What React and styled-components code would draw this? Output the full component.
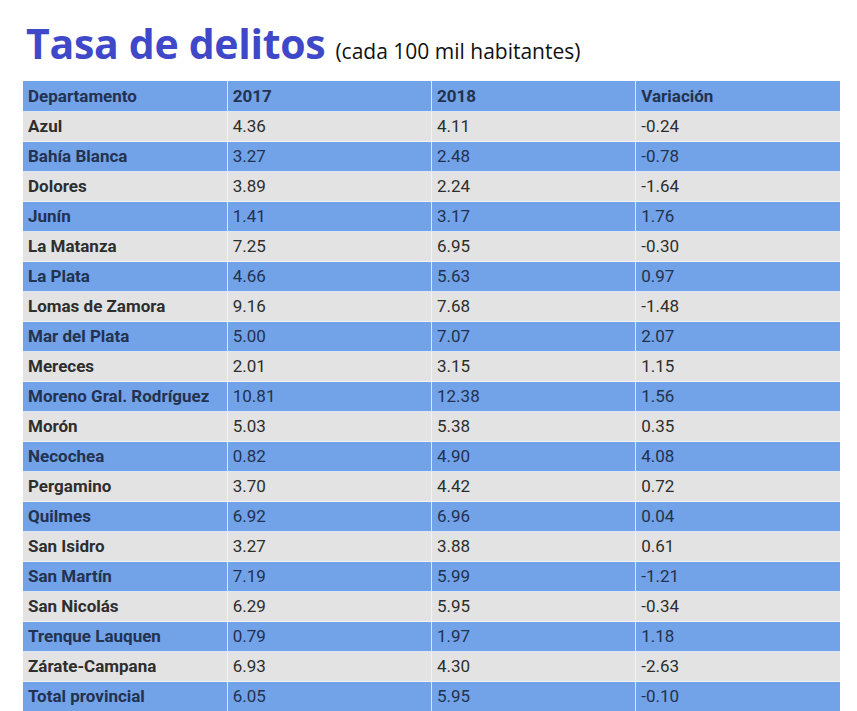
import React from 'react';
import styled, { createGlobalStyle } from 'styled-components';

const GlobalStyle = createGlobalStyle`
  html, body {
    margin: 0;
    padding: 0;
    background: #fff;
  }
`;

const Page = styled.main`
  width: 857px;
  height: 711px;
  overflow: hidden;
  padding: 16px 0 0 23px;
  box-sizing: border-box;
`;

const Heading = styled.h1`
  margin: 0 0 10px 3px;
  display: flex;
  align-items: baseline;
  gap: 10px;
  font-family: "Open Sans", sans-serif;
  line-height: 55px;
  height: 55px;

  .main {
    font-size: 41px;
    font-weight: 700;
    color: #3f48c8;
    letter-spacing: -0.3px;
  }
  .note {
    font-size: 21px;
    font-weight: 400;
    color: #111;
  }
`;

const Table = styled.table`
  width: 817px;
  table-layout: fixed;
  border-collapse: collapse;
  font-family: Roboto, "Liberation Sans", sans-serif;
  font-size: 17px;
`;

const Row = styled.tr`
  height: 30px;
  background: ${p => (p.$blue ? '#72a2e8' : '#e3e3e3')};
  color: ${p => (p.$blue ? '#23324f' : '#2e2e2e')};
`;

const Cell = styled.td`
  padding: 0 0 0 5px;
  border: 1px solid ${p => (p.$blue ? '#dbe6f6' : '#f1f3f6')};
  border-top: none;
  border-left: none;
  font-weight: ${p => (p.$bold ? 700 : 400)};
  text-align: left;
  white-space: nowrap;
  overflow: hidden;

  &:last-child {
    border-right: none;
  }
`;

const rows = [
  ['Azul', '4.36', '4.11', '-0.24'],
  ['Bahía Blanca', '3.27', '2.48', '-0.78'],
  ['Dolores', '3.89', '2.24', '-1.64'],
  ['Junín', '1.41', '3.17', '1.76'],
  ['La Matanza', '7.25', '6.95', '-0.30'],
  ['La Plata', '4.66', '5.63', '0.97'],
  ['Lomas de Zamora', '9.16', '7.68', '-1.48'],
  ['Mar del Plata', '5.00', '7.07', '2.07'],
  ['Mereces', '2.01', '3.15', '1.15'],
  ['Moreno Gral. Rodríguez', '10.81', '12.38', '1.56'],
  ['Morón', '5.03', '5.38', '0.35'],
  ['Necochea', '0.82', '4.90', '4.08'],
  ['Pergamino', '3.70', '4.42', '0.72'],
  ['Quilmes', '6.92', '6.96', '0.04'],
  ['San Isidro', '3.27', '3.88', '0.61'],
  ['San Martín', '7.19', '5.99', '-1.21'],
  ['San Nicolás', '6.29', '5.95', '-0.34'],
  ['Trenque Lauquen', '0.79', '1.97', '1.18'],
  ['Zárate-Campana', '6.93', '4.30', '-2.63'],
  ['Total provincial', '6.05', '5.95', '-0.10'],
];

const header = ['Departamento', '2017', '2018', 'Variación'];

export default function App() {
  return (
    <>
      <GlobalStyle />
      <Page>
        <Heading>
          <span className="main">Tasa de delitos</span>
          <span className="note">(cada 100 mil habitantes)</span>
        </Heading>
        <Table>
          <thead>
            <Row $blue>
              {header.map(h => (
                <Cell as="th" key={h} $blue $bold>
                  {h}
                </Cell>
              ))}
            </Row>
          </thead>
          <tbody>
            {rows.map((r, i) => {
              const blue = i % 2 === 1;
              return (
                <Row key={r[0]} $blue={blue}>
                  {r.map((v, j) => (
                    <Cell key={j} $blue={blue} $bold={j === 0}>
                      {v}
                    </Cell>
                  ))}
                </Row>
              );
            })}
          </tbody>
        </Table>
      </Page>
    </>
  );
}
